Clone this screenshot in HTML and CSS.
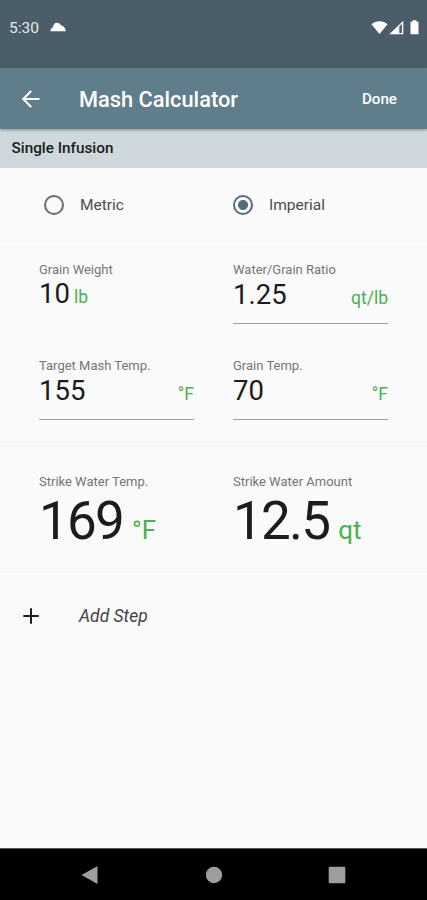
FILE: index.html
```html
<!DOCTYPE html>
<html lang="en">
<head>
    <meta charset="UTF-8">
    <meta name="viewport" content="width=device-width, initial-scale=1.0">
    <title>Mash Calculator</title>
    <link rel="stylesheet" href="styles.css">
</head>
<body>

    <div class="status-bar">
        <span class="clock">5:30</span>
        <svg class="cloud" width="16" height="10" viewBox="0 0 16 10"><path d="M.3 9.300C.5 7 1.600 5.700 3 5.200 3.200 2.500 4.700.7 7 .7c1.900 0 3.300 1 4 2.700 2.400 0 4.500 2.600 4.800 5.900z" fill="#fff"/></svg>
        <svg class="status-icons" width="50" height="16" viewBox="0 0 50 16">
            <path d="M.5 4.300C4.800.3 12.200.3 16.500 4.300L8.500 14z" fill="#fff"/>
            <path d="M18.300 14.300L32.300.8v13.500z" fill="#fff"/>
            <path d="M28.300 6.200l2.600-2.400v9.200h-2.600z" fill="#4a5d68"/>
            <path d="M39.500 1.700h2V.3h4v1.400h2v12.600h-8z" fill="#fff"/>
        </svg>
    </div>

    <div class="app-bar">
        <svg class="back" width="20" height="20" viewBox="0 0 20 20"><path d="M18.500 10H2.500M10.200 2L2.200 10l8 8" fill="none" stroke="#fff" stroke-width="2"/></svg>
        <h1>Mash Calculator</h1>
        <span class="done">Done</span>
    </div>

    <h2 class="section-title">Single Infusion</h2>

    <form class="calculator">
        <div class="units">
            <label class="radio"><span class="dot"></span>Metric</label>
            <label class="radio"><span class="dot checked"></span>Imperial</label>
        </div>

        <div class="fields">
            <div class="field plain">
                <span class="name">Grain Weight</span>
                <div class="line"><span class="value">10</span><span class="unit">lb</span></div>
            </div>
            <div class="field">
                <span class="name">Water/Grain Ratio</span>
                <div class="line"><span class="value">1.25</span><span class="unit">qt/lb</span></div>
            </div>
            <div class="field">
                <span class="name">Target Mash Temp.</span>
                <div class="line"><span class="value">155</span><span class="unit">°F</span></div>
            </div>
            <div class="field">
                <span class="name">Grain Temp.</span>
                <div class="line"><span class="value">70</span><span class="unit">°F</span></div>
            </div>
        </div>

        <div class="results">
            <div class="result">
                <span class="name">Strike Water Temp.</span>
                <div class="line"><span class="value">169</span><span class="unit">°F</span></div>
            </div>
            <div class="result">
                <span class="name">Strike Water Amount</span>
                <div class="line"><span class="value">12.5</span><span class="unit">qt</span></div>
            </div>
        </div>

        <div class="add-step">
            <svg width="16" height="16" viewBox="0 0 16 16"><path d="M8 .3v15.400M.3 8h15.400" stroke="#1c1c1c" stroke-width="2"/></svg>
            <span class="add-text">Add Step</span>
        </div>
    </form>

    <div class="nav-bar">
        <svg width="18" height="20" viewBox="0 0 18 20"><path d="M.5 10L16.500 1v18z" fill="#9e9e9e"/></svg>
        <svg width="18" height="18" viewBox="0 0 18 18"><circle cx="9" cy="9" r="8.200" fill="#9e9e9e"/></svg>
        <svg width="18" height="18" viewBox="0 0 18 18"><rect x=".7" y=".7" width="16.600" height="16.600" rx="1" fill="#9e9e9e"/></svg>
    </div>

</body>
</html>
```

FILE: styles.css
```css
body {
    margin: 0;
    height: 900px;
    display: flex;
    flex-direction: column;
    overflow: hidden;
    font-family: Roboto, 'Liberation Sans', sans-serif;
    background-color: #fafafa;
    color: #1c1c1c;
}

svg {
    display: block;
}

.status-bar {
    display: flex;
    align-items: center;
    height: 68px;
    padding: 0 6px 13px 9px;
    box-sizing: border-box;
    background-color: #4a5d68;
    color: #e4ebee;
}

.clock {
    width: 41px;
    padding-top: 1px;
    font-size: 15.5px;
}

.cloud {
    margin-bottom: 2px;
}

.status-icons {
    margin-left: auto;
}

.app-bar {
    display: flex;
    align-items: center;
    height: 61px;
    padding: 0 30px 0 21px;
    box-sizing: border-box;
    background-color: #607d8c;
    color: #fff;
    box-shadow: 0 1px 3px rgba(0, 0, 0, 0.35);
    z-index: 1;
}

.app-bar h1 {
    margin: 1px 0 0 38px;
    font-size: 21.8px;
    font-weight: 500;
}

.done {
    margin-left: auto;
    font-size: 15.2px;
    font-weight: 500;
}

.section-title {
    height: 39px;
    margin: 0;
    padding-left: 11.5px;
    box-sizing: border-box;
    font-size: 15.3px;
    font-weight: 500;
    line-height: 39px;
    background-color: #cfd8dc;
}

.calculator {
    flex: 1;
}

.units,
.fields,
.results {
    display: grid;
    grid-template-columns: 155px 155px;
    column-gap: 39px;
    padding-left: 39px;
    box-sizing: border-box;
    border-bottom: 1px solid #f3f3f3;
}

.units {
    height: 73px;
    padding-top: 4px;
    border-bottom: 3px solid #f7f7f7;
}

.radio {
    display: flex;
    align-items: center;
    font-size: 15.5px;
    color: #4c4c4c;
}

.dot {
    width: 20px;
    height: 20px;
    margin: 0 16px 0 5px;
    box-sizing: border-box;
    border: 2px solid #6b6b6b;
    border-radius: 50%;
}

.radio .checked {
    margin-left: 0;
    border-color: #546e7a;
    background: radial-gradient(circle, #546e7a 4.7px, transparent 5.3px);
}

.fields {
    height: 205px;
    padding-top: 21px;
    grid-template-rows: 96px 96px;
}

.name {
    display: block;
    font-size: 13px;
    line-height: 16px;
    color: #757575;
    white-space: nowrap;
}

.line {
    display: flex;
    align-items: baseline;
    justify-content: space-between;
}

.unit {
    color: #4caf50;
}

.field .line {
    height: 47px;
    margin-top: -1px;
    padding-top: 2px;
    box-sizing: border-box;
    border-bottom: 1px solid #9e9e9e;
}

.field .value {
    font-size: 27.5px;
    line-height: 32px;
}

.field .unit {
    font-size: 17.5px;
}

.plain .line {
    justify-content: flex-start;
    gap: 4px;
    padding-top: 1px;
    border-bottom: none;
}

.results {
    height: 123px;
    padding-top: 28px;
}

.result .line {
    justify-content: flex-start;
    gap: 9px;
    padding-top: 1px;
}

.result .value {
    font-size: 53px;
    line-height: 60px;
    letter-spacing: -1.8px;
}

.result .unit {
    font-size: 26px;
}

.add-step {
    display: flex;
    align-items: center;
    height: 94px;
    padding-left: 23px;
}

.add-text {
    margin-left: 40px;
    font-size: 17.5px;
    font-style: italic;
    color: #444;
}

.nav-bar {
    display: flex;
    align-items: center;
    justify-content: space-between;
    height: 52px;
    padding: 0 81px;
    box-sizing: border-box;
    border-top: 1px solid #555;
    background-color: #000;
}
```
